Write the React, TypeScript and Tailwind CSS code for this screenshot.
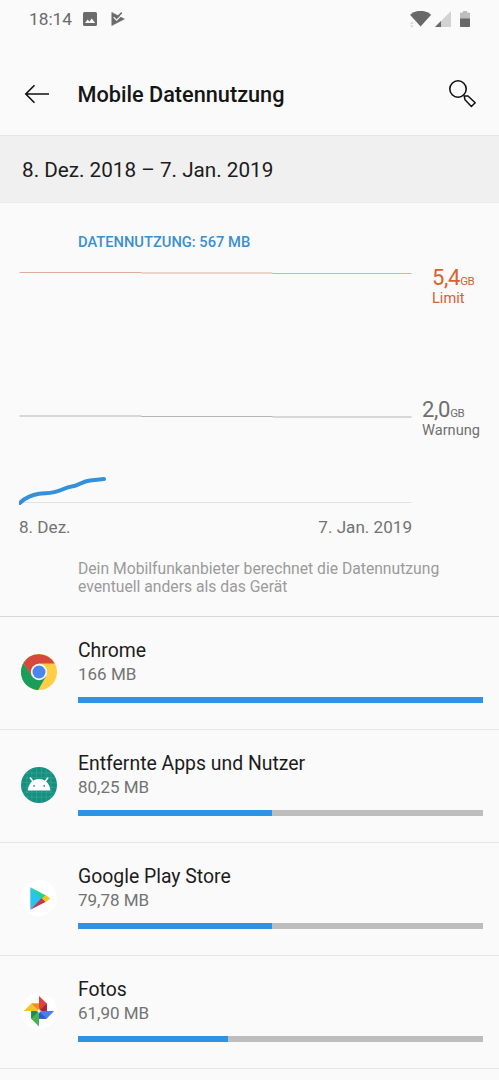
import type { ReactNode } from 'react';

type AppUsage = {
  name: string;
  usage: string;
  percent: number;
  icon: ReactNode;
};

function ChromeIcon() {
  return (
    <svg viewBox="0 0 36 36" className="size-9">
      <circle cx="18" cy="18" r="18" fill="#ffcd46" />
      <path d="M2.4 9A18 18 0 0 0 17.2 36L25 22.2 11 22Z" fill="#1a9c5b" />
      <path d="M2.4 9A18 18 0 0 1 33.6 9.6H18L10.5 21.5Z" fill="#d6483c" />
      <circle cx="18" cy="18" r="8.2" fill="#f5f7fa" />
      <circle cx="18" cy="18" r="6.5" fill="#4a86ee" />
    </svg>
  );
}

function AndroidIcon() {
  return (
    <svg viewBox="0 0 36 36" className="size-9">
      <circle cx="18" cy="18" r="18" fill="#149080" />
      <path
        d="M6 5v26M10.8 2v32M15.6 0v36M20.4 0v36M25.2 2v32M30 5v26M5 6h26M2 10.8h32M0 15.6h36M0 20.4h36M2 25.2h32M5 30h26"
        stroke="#45a999"
        strokeWidth="0.5"
        fill="none"
      />
      <path d="M9.4 11 12.4 15M26.8 11 23.8 15" stroke="#fff" strokeWidth="1.5" strokeLinecap="round" />
      <path d="M6.8 23.6C7.4 16.4 12 12 18 12s10.8 4.4 11.4 11.6Z" fill="#fff" />
      <circle cx="13" cy="18.8" r="0.9" fill="#149080" />
      <circle cx="23.2" cy="18.8" r="0.9" fill="#149080" />
    </svg>
  );
}

function PlayStoreIcon() {
  return (
    <svg viewBox="0 0 36 36" className="size-9">
      <circle cx="18" cy="18" r="18" fill="#fff" />
      <path d="M9.3 7.2v22.5L22 18.5Z" fill="#27c5ee" />
      <path d="M9.3 7.2 25 15.4 21 19Z" fill="#22d58a" />
      <path d="M9.3 29.7 25 21.8 21 17.8Z" fill="#c73550" />
      <path d="M24.8 15.2 28.8 18.2Q29.2 18.6 28.8 19L24.8 22 20.8 18.5Z" fill="#fcc21b" />
    </svg>
  );
}

function PhotosIcon() {
  return (
    <svg viewBox="0 0 36 36" className="size-9">
      <circle cx="18" cy="18" r="18" fill="#fff" />
      <path d="M18 3 25.8 10.5V18H18Z" fill="#db4437" />
      <path d="M18 18 25.8 10.5V18Z" fill="#a52146" />
      <path d="M2.8 18 10.4 10.5H18V18Z" fill="#fbc02d" />
      <path d="M10.4 10.5 18 18V10.5Z" fill="#ef8e1c" />
      <path d="M18 33.4 10.2 25.7V18H18Z" fill="#4caf50" />
      <path d="M18 18 10.2 25.7V18Z" fill="#208a53" />
      <path d="M33.2 18 25.6 25.7H18V18Z" fill="#4a7df0" />
      <path d="M25.6 25.7 18 18V25.7Z" fill="#315bc4" />
      <path d="m18 15.2.8 2 2 .8-2 .8-.8 2-.8-2-2-.8 2-.8Z" fill="#fff" />
    </svg>
  );
}

const apps: AppUsage[] = [
  { name: 'Chrome', usage: '166 MB', percent: 100, icon: <ChromeIcon /> },
  { name: 'Entfernte Apps und Nutzer', usage: '80,25 MB', percent: 48, icon: <AndroidIcon /> },
  { name: 'Google Play Store', usage: '79,78 MB', percent: 48, icon: <PlayStoreIcon /> },
  { name: 'Fotos', usage: '61,90 MB', percent: 37, icon: <PhotosIcon /> },
];

function StatusBar() {
  return (
    <div className="flex h-[38px] items-center px-[29px] text-[#6b6b6b]">
      <span className="w-[54px] text-[17.3px] leading-5">18:14</span>
      <svg viewBox="0 0 14 14" className="size-[14px]">
        <path
          fillRule="evenodd"
          d="M1.5 0h11A1.5 1.5 0 0 1 14 1.5v11a1.5 1.5 0 0 1-1.5 1.5h-11A1.5 1.5 0 0 1 0 12.5v-11A1.5 1.5 0 0 1 1.5 0ZM2 11h10.2L8.8 6.4 6.4 9.5 4.6 7.6Z"
          fill="#6b6b6b"
        />
      </svg>
      <svg viewBox="0 0 14 14" className="ml-[14px] size-[14px]">
        <path d="M.8.4 13.4 7 .8 13.6Z" fill="#6b6b6b" stroke="#6b6b6b" strokeWidth="0.6" strokeLinejoin="round" />
        <path d="M2.6 5.2 5.6 8.2 12.6 1.2" stroke="#fafafa" strokeWidth="1.2" fill="none" />
        <path d="M6 5.4 10.8.6" stroke="#6b6b6b" strokeWidth="1.5" />
      </svg>
      <div className="ml-auto flex items-center">
        <svg viewBox="0 0 22 17" className="h-[17px] w-[22px]">
          <path d="M10.6 15.6 0 3.8a16 16 0 0 1 21.2 0Z" fill="#686868" />
          <path d="m0 12.8 1.8-2 1.8 2ZM0 14.6l1.8 2 1.8-2Z" fill="#cfcfcf" />
        </svg>
        <svg viewBox="0 0 16 16" className="ml-[3px] size-4">
          <path d="M16 0v16H0Z" fill="#d2d2d2" />
          <path d="M6 10v6H0Z" fill="#686868" />
        </svg>
        <svg viewBox="0 0 10 16" className="ml-[9px] h-4 w-[10px]">
          <path d="M3 0h4v1.6h2.2q.8 0 .8.8V8H0V2.4q0-.8.8-.8H3Z" fill="#bdbdbd" />
          <path d="M0 7.5h10v7.7q0 .8-.8.8H.8q-.8 0-.8-.8Z" fill="#686868" />
        </svg>
      </div>
    </div>
  );
}

function Header() {
  return (
    <header className="flex h-[98px] items-center border-b border-[#e6e6e6] pl-[24px] pr-[23px] pt-[15px]">
      <svg viewBox="0 0 26 20" className="h-5 w-[26px]" fill="none" stroke="#111" strokeWidth="1.6">
        <path d="M25 10H1.8M10.5 1.3 1.8 10l8.7 8.7" />
      </svg>
      <h1 className="ml-[27.5px] mt-[2px] whitespace-nowrap text-[21.7px] font-medium leading-6 text-[#151515]">
        Mobile Datennutzung
      </h1>
      <svg viewBox="0 0 28 28" className="ml-auto size-7" fill="none" stroke="#111">
        <circle cx="10" cy="9" r="8.2" strokeWidth="1.6" />
        <path d="M16.2 16h3.8l7.2 6.7-3.8 3.8-6.4-6.7Z" strokeWidth="1.5" strokeLinejoin="round" />
      </svg>
    </header>
  );
}

function UsageChart() {
  return (
    <section className="h-[414px] border-b border-[#d6d6d6] pt-[29px]">
      <p className="pl-[78px] text-[14.7px] font-medium leading-5 text-[#3a90cf]">DATENNUTZUNG: 567 MB</p>
      <div className="flex h-[262px] pl-[19px]">
        <svg viewBox="0 0 393 262" className="h-[262px] w-[393px] shrink-0" fill="none">
          <path d="M.5 20.5h122v.5h131v.5h139" stroke="#dcae9a" />
          <path d="M.5 164h122v.5h131v.5h139" stroke="#b4b4b4" />
          <path d="M.5 250.5h392" stroke="#e2e2e2" />
          {/* cumulative usage so far */}
          <path
            d="M.8 251C6 246 12 243 20 241.8C28 240.8 34 241.5 42 238C47 235.5 50 234.5 56 233.7C61 232.5 64 229 71 228.4L85 227"
            stroke="#3391dc"
            strokeWidth="4"
            strokeLinecap="round"
            strokeLinejoin="round"
          />
        </svg>
        <div className="flex flex-col pt-[13px] text-[#6f6f6f]">
          <div className="ml-5 h-[132px] text-[#d9602f]">
            <p className="h-6 whitespace-nowrap text-[22px] leading-[25px] tracking-[-0.3px]">
              5,4<span className="text-[11.5px] tracking-[-0.4px]">GB</span>
            </p>
            <p className="text-[14.6px] leading-[19px]">Limit</p>
          </div>
          <div className="ml-[10px]">
            <p className="h-6 whitespace-nowrap text-[22px] leading-[25px] tracking-[-0.3px]">
              2,0<span className="text-[11.5px] tracking-[-0.4px]">GB</span>
            </p>
            <p className="text-[14.6px] leading-[19px]">Warnung</p>
          </div>
        </div>
      </div>
      <div className="flex w-[412px] justify-between pl-[19px] pt-[3px] text-[17.1px] leading-5 text-[#737373]">
        <span>8. Dez.</span>
        <span>7. Jan. 2019</span>
      </div>
      <p className="whitespace-nowrap pl-[78px] pt-[22.5px] text-[15.7px] leading-[18.5px] text-[#9b9b9b]">
        Dein Mobilfunkanbieter berechnet die Datennutzung
        <br />
        eventuell anders als das Gerät
      </p>
    </section>
  );
}

function AppRow({ name, usage, percent, icon }: AppUsage) {
  return (
    <li className="flex h-[113px] border-b border-[#e6e6e6] pl-[21px] pr-4">
      <div className="w-[57px] shrink-0 pt-[37px]">{icon}</div>
      <div className="flex-1 pt-[22px]">
        <p className="text-[19.4px] leading-6 text-[#1c1c1c]">{name}</p>
        <p className="pt-px text-[17px] leading-5 text-[#737373]">{usage}</p>
        <div className="mt-[13px] h-[6px] bg-[#bdbdbd]">
          <div className="h-full bg-[#2f92e2]" style={{ width: `${percent}%` }} />
        </div>
      </div>
    </li>
  );
}

export default function App() {
  return (
    <main className="h-[1080px] w-[499px] overflow-hidden bg-[#fafafa] font-['Roboto',sans-serif]">
      <StatusBar />
      <Header />
      <div className="flex h-[67px] items-center border-b border-[#ececec] bg-[#f0f0f0] pl-[22px] pt-[3px] text-[20.7px] text-[#1c1c1c]">
        8. Dez. 2018 – 7. Jan. 2019
      </div>
      <UsageChart />
      <ul>
        {apps.map((app) => (
          <AppRow key={app.name} {...app} />
        ))}
      </ul>
    </main>
  );
}
